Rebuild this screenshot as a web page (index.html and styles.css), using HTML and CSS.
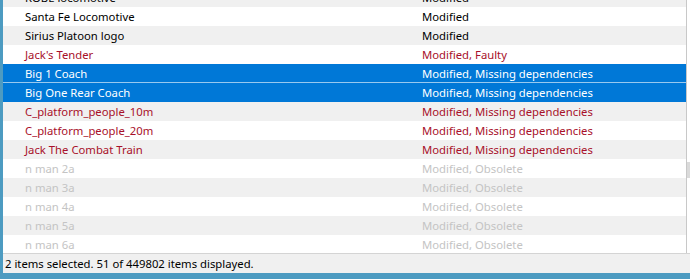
FILE: index.html
```html
<!DOCTYPE html>
<html lang="en">
<head>
    <meta charset="UTF-8">
    <title>Assets</title>
    <link rel="stylesheet" href="styles.css">
</head>
<body>
    <div class="window">
        <div class="pane">
            <div class="list">
                <div class="row"><span>ROBE locomotive</span><span>Modified</span></div>
                <div class="row"><span>Santa Fe Locomotive</span><span>Modified</span></div>
                <div class="row"><span>Sirius Platoon logo</span><span>Modified</span></div>
                <div class="row faulty"><span>Jack's Tender</span><span>Modified, Faulty</span></div>
                <div class="row selected focus"><span>Big 1 Coach</span><span>Modified, Missing dependencies</span></div>
                <div class="row selected"><span>Big One Rear Coach</span><span>Modified, Missing dependencies</span></div>
                <div class="row faulty"><span>C_platform_people_10m</span><span>Modified, Missing dependencies</span></div>
                <div class="row faulty"><span>C_platform_people_20m</span><span>Modified, Missing dependencies</span></div>
                <div class="row faulty"><span>Jack The Combat Train</span><span>Modified, Missing dependencies</span></div>
                <div class="row obsolete"><span>n man 2a</span><span>Modified, Obsolete</span></div>
                <div class="row obsolete"><span>n man 3a</span><span>Modified, Obsolete</span></div>
                <div class="row obsolete"><span>n man 4a</span><span>Modified, Obsolete</span></div>
                <div class="row obsolete"><span>n man 5a</span><span>Modified, Obsolete</span></div>
                <div class="row obsolete"><span>n man 6a</span><span>Modified, Obsolete</span></div>
            </div>
            <div class="scrollbar"><div class="thumb"></div></div>
        </div>
        <div class="status">2 items selected. 51 of 449802 items displayed.</div>
    </div>
</body>
</html>
```

FILE: styles.css
```css
body {
    margin: 0;
    font-family: "Noto Sans", sans-serif;
    font-size: 11.3px;
    background: #4d9bc1;
}
.window {
    width: 687px;
    height: 273px;
    margin-left: 3px;
    background: #f0f0f0;
    overflow: hidden;
    display: flex;
    flex-direction: column;
}
.pane {
    display: flex;
    height: 253px;
    overflow: hidden;
    background: #fff;
    border-bottom: 1px solid #d4d4d4;
}
.list {
    flex: 1;
    margin-top: -12px;
}
.row {
    display: grid;
    grid-template-columns: 397px 1fr;
    height: 19px;
    line-height: 19px;
    padding-left: 22px;
    color: #000;
    background: #fff;
}
.row:nth-child(odd) {
    background: #f0f0f0;
}
.row.faulty {
    color: #a8102a;
}
.row.obsolete {
    color: #c4c4c4;
}
.row.selected {
    background: #0078d7;
    color: #fff;
}
.row.focus {
    height: 18px;
    border-bottom: 1px solid #99c9ef;
}
.scrollbar {
    width: 3px;
    border-left: 1px solid #c8c8c8;
    background: #fff;
}
.thumb {
    margin-top: 162px;
    height: 16px;
    background: #dadada;
}
.status {
    height: 19px;
    line-height: 19px;
    padding-left: 2px;
    color: #000;
}
```
